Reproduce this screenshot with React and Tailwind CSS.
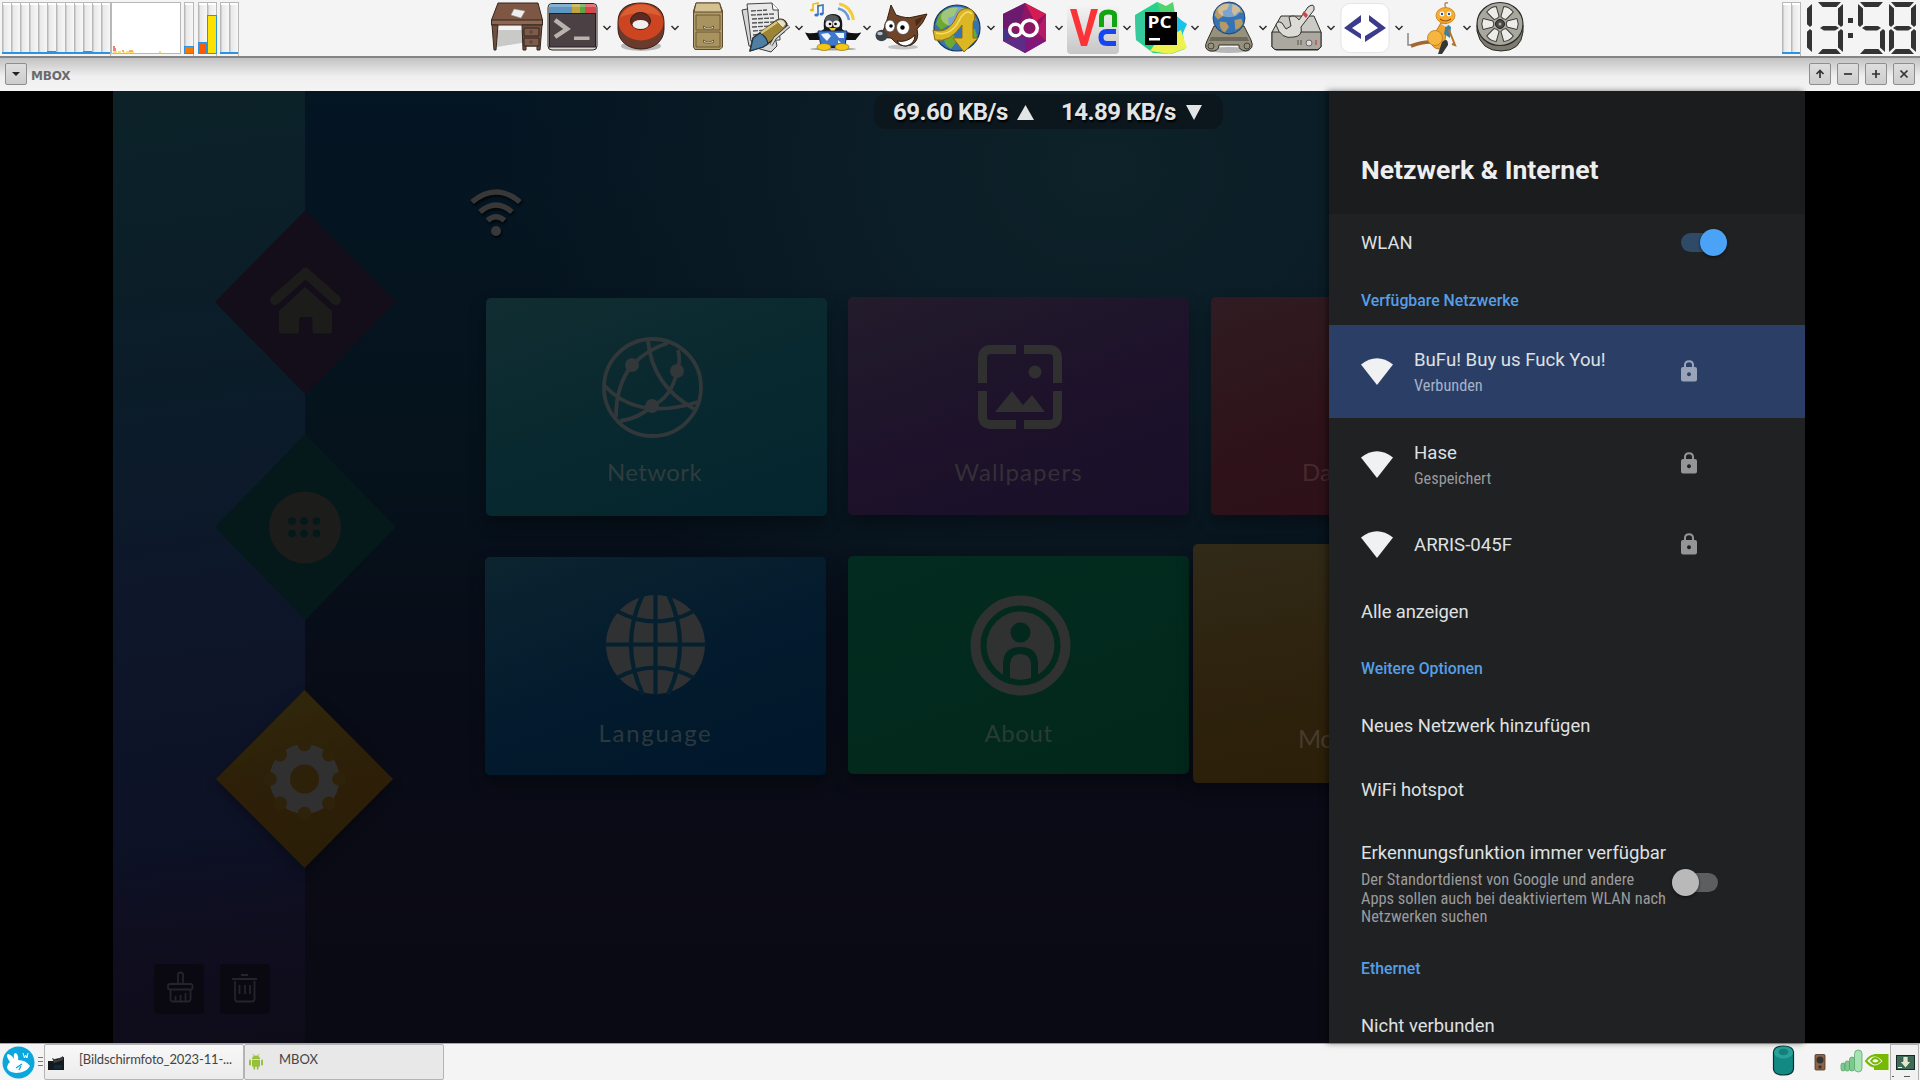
import React from "react";

/* ---------- top panel: monitors ---------- */

function Meter({ width = "w-[9px]", fill, fillClass }) {
  return (
    <div
      className={`relative h-[52px] ${width} border-t border-b border-l border-[#b8b8b8] bg-gradient-to-r from-[#e6e6e6] to-[#f7f7f7] shadow-[inset_0_2px_0_#fff,inset_1px_0_0_#d0d0d0] flex flex-col justify-end`}
    >
      {fill ? (
        <div className={`-ml-px border border-t-[1.5px] border-[#2b93e6] ${fillClass}`} />
      ) : (
        <div className="-ml-px h-[2px] -mb-px bg-[#2b93e6]" />
      )}
    </div>
  );
}

function CpuMeters() {
  const bumps = [5, 9];
  return (
    <div className="flex border-r border-[#b8b8b8]">
      {Array.from({ length: 12 }, (_, i) => (
        <Meter key={i} fill={bumps.includes(i)} fillClass="h-[3px] bg-[#cfe4f5] border-b-2 -mb-px" />
      ))}
    </div>
  );
}

function LoadGraph() {
  return (
    <svg className="h-[52px] w-[70px] border border-[#b8b8b8] bg-white" viewBox="0 0 68 50" shapeRendering="crispEdges">
      <path d="M1 43h2v2h1v5H1z" fill="#f08070" />
      <path d="M1 48h4v2H1zM6 48h3v2H6zM11 49h2v1h-2zM14 48h8v2h-8zM47 48h2v2h-2z" fill="#ffe070" />
      <path d="M10 47h2v2h-2zM17 47h4v2h-4z" fill="#f5b070" />
    </svg>
  );
}

/* ---------- top panel: launcher icons (56 × 56 boxes) ---------- */

function Desk() {
  return (
    <g stroke="#33261f" strokeWidth="1" strokeLinejoin="round">
      <path d="M8 47V30h30v12z" fill="#c9c9c7" stroke="none" />
      <path d="M9 3H49L53.500 20V24H2.500V20z" fill="#7d5744" />
      <path d="M2.500 20H53.500V25H2.500z" fill="#8f6750" />
      <path d="M3 25H9L7 50H5zM33 25H53L51 50H48V46H37V50H34z" fill="#70503f" />
      <path d="M35 28H50V36H35zM35 38H50V46H35z" fill="#7c5b48" />
      <path d="M25 9L36 11L32 18L22 15z" fill="#eee" stroke="#999" strokeWidth=".5" />
      <circle cx="42" cy="32" r="1" fill="#ddd" /><circle cx="42" cy="42" r="1" fill="#ddd" />
    </g>
  );
}
function Terminal() {
  return (
    <g>
      <rect x="3" y="3.500" width="49" height="46.500" rx="4" fill="#ddd9ce" stroke="#2b2426" />
      <path d="M4 13V8q0-4 4-4H27V13z" fill="#5d96c2" /><path d="M27 4h8v9h-8z" fill="#c2a43c" />
      <path d="M35 4h5v9h-5z" fill="#62a344" /><path d="M40 4h7q4 0 4 4v5H40z" fill="#d8474b" />
      <path d="M4 7q0-3 4-3h39q4 0 4 3z" fill="#fff" opacity=".25" />
      <rect x="4.500" y="13.500" width="46" height="33.500" fill="#4b4044" stroke="#241e20" />
      <path d="M10 20L22 29L10 37" fill="none" stroke="#b9b3ad" strokeWidth="4.500" />
      <path d="M29 36.500H44.500V40H29z" fill="#b9b3ad" />
    </g>
  );
}
function Ring() {
  return (
    <g>
      <ellipse cx="28" cy="46" rx="20" ry="5" fill="#000" opacity=".25" />
      <path d="M5 22C5 8 15 3 28 3s23 6 23 19v7c0 12-10 20-23 20S5 41 5 29z" fill="#6a3a2c" stroke="#3b1f18" />
      <ellipse cx="28" cy="22" rx="22.500" ry="18.500" fill="#cd4420" />
      <path d="M7 18C11 8 20 4.500 28 4.500s16 3 20 12c-9-5-32-5-41 1.500z" fill="#e06a3c" opacity=".7" />
      <ellipse cx="27.500" cy="21" rx="10" ry="8.500" fill="#5c2a20" stroke="#3a1b14" />
      <ellipse cx="27.500" cy="24.500" rx="8" ry="4.500" fill="#f1eeec" />
    </g>
  );
}
function Cabinet() {
  return (
    <g stroke="#5d4b2c" strokeLinejoin="round">
      <path d="M15 3H38.500L41.500 11V47L39 49.500H14L12.500 47V11z" fill="#b09a67" />
      <path d="M15 3H38.500L41 12H13z" fill="#d3c192" />
      <path d="M15 15H39V30H15zM15 32H39V47H15z" fill="#a8925e" strokeWidth=".8" />
      <path d="M22.500 26q5 4 10 0v2.500q-5 2-10 0zM22.500 40q5 4 10 0v2.500q-5 2-10 0z" fill="#e4ddc0" strokeWidth=".8" />
    </g>
  );
}
function Papers() {
  return (
    <g strokeLinejoin="round">
      <path d="M5 10L31 5L40 46L34 52L12 46z" fill="#d6d6d6" stroke="#3d3d3d" />
      <path d="M10 4L35 3L41 9L43 40L14 41z" fill="#e9e9e9" stroke="#444" />
      <path d="M35 3L36 10H42" fill="#fff" stroke="#444" />
      <path d="M14 11l16-1M14 15l23-1M15 19l22-1M15 23l22-1M15 27l19-1M16 31l14-1M16 35l10-1" stroke="#555" strokeWidth="1.300" strokeDasharray="5 1" />
      <path d="M13 51L16 38L40 20Q47 17 50 24L47 32L26 47z" fill="#9c8434" stroke="#2d2a22" strokeWidth="1.300" />
      <path d="M13 51L16 38L23 33Q30 37 31 44L26 47z" fill="#4f7fa4" stroke="#26343e" strokeWidth="1.300" />
      <path d="M24 33L40 22" stroke="#d9c878" strokeWidth="2.500" />
      <path d="M39 21Q46 17 49 24L46 28z" fill="#e8e0c0" stroke="#555" strokeWidth=".6" />
      <path d="M52 26L38 38L34 45" fill="none" stroke="#333" strokeWidth="3.500" /><path d="M52 26L38 38L34 45" fill="none" stroke="#d5d5d5" strokeWidth="2" />
    </g>
  );
}
function Penguin() {
  return (
    <g>
      <ellipse cx="28" cy="49" rx="23" ry="1.500" fill="#555" opacity=".5" />
      <path d="M15 33Q7 35 2 34l3 5h9zM41 33Q49 35 54 34l-4 5h-8z" fill="#111" stroke="#111" strokeWidth="2" />
      <path d="M15 40Q14 31 19 29Q17 14 28 14T37 29Q43 32 41 42L38 48H18z" fill="#17181a" />
      <ellipse cx="27" cy="19.500" rx="7" ry="4.500" fill="#55585c" />
      <circle cx="24" cy="24" r="3.500" fill="#eee" /><circle cx="31.500" cy="24" r="3.500" fill="#eee" />
      <circle cx="25" cy="24" r="1.300" /><circle cx="30.500" cy="24" r="1.300" />
      <path d="M24 28L31 28L28 33z" fill="#f4c51d" />
      <path d="M13 31H42L40 46H16z" fill="#3d78cd" stroke="#17366c" />
      <path d="M16 34l7-1 3 3-4 5-4-4zM30 33l9 0 0 5-5 0zM33 40l3 3h-3z" fill="#edf3fa" />
      <ellipse cx="19" cy="47" rx="7" ry="3.500" fill="#f3c713" stroke="#8a6800" strokeWidth=".6" />
      <ellipse cx="37" cy="47" rx="7" ry="3.500" fill="#f3c713" stroke="#8a6800" strokeWidth=".6" />
      <path d="M8 10V4l5-1v6" fill="none" stroke="#e9bd15" strokeWidth="1.500" /><path d="M13 15V6l5-1v9" fill="none" stroke="#3973c5" strokeWidth="1.600" />
      <ellipse cx="7" cy="10" rx="2" ry="1.500" fill="#e9bd15" /><ellipse cx="11.500" cy="15" rx="2.200" ry="1.500" fill="#3973c5" /><ellipse cx="16.500" cy="14" rx="2" ry="1.500" fill="#3973c5" />
      <path d="M34 4Q46 6 48.500 20" fill="none" stroke="#f2cd38" strokeWidth="3" />
      <path d="M33 8.500Q42 10 44 20" fill="none" stroke="#6a9bd6" strokeWidth="2.500" />
    </g>
  );
}
function Gimp() {
  return (
    <g>
      <ellipse cx="30" cy="47" rx="15" ry="2.500" fill="#000" opacity=".2" />
      <path d="M14 20L18 5L23 15Q34 19 40 17L54 14Q50 24 44 29Q47 41 38 45Q27 49 18 38Q8 38 7 33Q12 30 12 24z" fill="#6f4428" stroke="#33200f" />
      <path d="M42 20L51 16Q47 23 43 26z" fill="#4a2c18" />
      <path d="M24 41Q34 43 42 35Q42 44 33 46Q27 46 24 41z" fill="#fff" stroke="#2d1c10" />
      <ellipse cx="17" cy="26" rx="5" ry="6" fill="#fff" stroke="#444" strokeWidth=".7" /><circle cx="18" cy="26" r="1.800" />
      <ellipse cx="30" cy="27.500" rx="6.500" ry="7" fill="#fff" stroke="#444" strokeWidth=".7" /><circle cx="29.500" cy="27.500" r="2.200" />
      <ellipse cx="8.500" cy="35.500" rx="6" ry="5.800" fill="#3b4248" /><ellipse cx="7" cy="33.500" rx="2.800" ry="1.800" fill="#b8c0c8" />
    </g>
  );
}
function Globe({ cx = 28, cy = 28, r = 23, land = "#6da832" }) {
  const k = r / 23;
  return (
    <g transform={`translate(${cx} ${cy}) scale(${k})`}>
      <circle r="23" fill="#3573b5" stroke="#16375c" strokeWidth="1.200" />
      <path d="M-18 -13Q-8 -23 1 -20L-3 -12L-9 -10L-8 -3L-16 2L-21 -4zM5 -20Q17 -16 20 -7L13 -9L8 -3L4 -9zM-13 5L-4 6L0 13L-6 21Q-15 16 -13 5zM8 3L18 1L20 8Q16 16 9 17z" fill={land} />
      <ellipse cy="-11" rx="16" ry="10" fill="#fff" opacity=".35" />
    </g>
  );
}
function Browser() {
  return (
    <g>
      <Globe cx={28} cy={28} r={23} />
      <path d="M4 30Q21 35 29 13Q35 6 43 10Q48 15 44 23V38H49L35 52L24 38H33V25Q21 43 6 40z" fill="#dcb725" stroke="#8c6c0c" />
      <path d="M7 33Q23 37 32 17Q38 9 43 14" fill="none" stroke="#f5de6c" strokeWidth="1.500" />
    </g>
  );
}
function Hexagon() {
  return (
    <g>
      <path d="M28 3L49 14V41L28 53L6 41V14z" fill="#8c1664" />
      <path d="M28 3L49 14L38 22z" fill="#d41b52" /><path d="M49 14V41L39 31z" fill="#b81868" />
      <path d="M6 14L28 3L24 22L6 30z" fill="#6c1a6e" /><path d="M6 28L22 34L6 41z" fill="#44338a" />
      <path d="M6 41L28 36V53z" fill="#5c2c86" /><path d="M28 37L49 41L28 53z" fill="#82177b" />
      <circle cx="18.500" cy="30" r="5.800" fill="none" stroke="#fff" strokeWidth="3.500" />
      <circle cx="32.500" cy="28" r="7.800" fill="none" stroke="#fff" strokeWidth="3.500" />
    </g>
  );
}
function Vnc() {
  return (
    <g>
      <defs><linearGradient id="vb" x2="0" y2="1"><stop stopColor="#f6f6f6" /><stop offset="1" stopColor="#c6c6c6" /></linearGradient></defs>
      <rect x="2" y="3" width="52" height="51" rx="4" fill="url(#vb)" />
      <path d="M5 9H11.500L19 36L26 9H33L22 46H16z" fill="#fb3236" />
      <path d="M36.500 27V17q0-5 7-5t6 5V27" fill="none" stroke="#12a412" strokeWidth="5" />
      <path d="M51 31.500H42q-6 0-6 6t6 6h9" fill="none" stroke="#1746f0" strokeWidth="5" />
    </g>
  );
}
function Pycharm() {
  return (
    <g>
      <path d="M2 15L24 2L34 7L48 20L52 49L38 54L20 53L3 40z" fill="#24d28c" />
      <path d="M24 2L33 6L40 2L42 14L30 20z" fill="#50d46c" /><path d="M42 16L54 24L46 42z" fill="#18c3ec" />
      <path d="M48 30L54 48L37 54L17 51L22 44z" fill="#eef24e" /><path d="M2 16L14 12V44L3 40z" fill="#35c99c" />
      <rect x="12" y="12" width="32" height="33" fill="#000" />
      <text x="14.500" y="28" fill="#fff" fontFamily="Open Sans, sans-serif" fontWeight="700" fontSize="16" textLength="24" lengthAdjust="spacingAndGlyphs">PC</text>
      <path d="M16 38h11v2.500H16z" fill="#fff" />
    </g>
  );
}
function GlobeStand() {
  return (
    <g>
      <ellipse cx="28" cy="50" rx="21" ry="3" fill="#000" opacity=".25" />
      <path d="M13 26H43L50 40Q54 49 45 51Q37 50 38 45H18Q18 52 9 51Q2 49 6 41z" fill="#96917c" stroke="#2f2d27" />
      <path d="M10 37H46L48 41H8z" fill="#6e6a5b" />
      <circle cx="10" cy="46" r="3" fill="none" stroke="#45423a" /><circle cx="46" cy="46" r="3" fill="none" stroke="#45423a" />
      <Globe cx={28} cy={18} r={16} land="#b79a62" />
    </g>
  );
}
function Wrench() {
  return (
    <g strokeLinejoin="round">
      <path d="M12 16H45L52 32V47L49 50H7L3 47V32z" fill="#cbcac4" stroke="#2e2e2c" />
      <path d="M3 32H52V47L49 49.500H6L3 47z" fill="#aaa89f" stroke="#2e2e2c" />
      <path d="M29 40v5M32 40v5" stroke="#555" /><circle cx="40" cy="43" r="3" fill="#ddd" stroke="#666" /><path d="M47 40v5" stroke="#b55" strokeWidth="1.500" />
      <path d="M7 25Q8 20 13 23L17 29L22 26L20 17Q26 14 30 20L39 7Q46 2 45 10L32 27Q34 36 25 37Q12 40 7 25z" fill="#dcdbd6" stroke="#353533" />
      <path d="M35 11L39 15L37 18L33 14z" fill="#c84848" />
    </g>
  );
}
function Code() {
  return (
    <g>
      <rect x="4" y="3.500" width="48" height="49" rx="9" fill="#fff" stroke="#e0e0e0" strokeWidth=".8" />
      <path d="M24 15V22L15 28L24 34V39L7 28z" fill="#3b3b8c" /><path d="M32 15V21L41 28L28 36V42L49 28z" fill="#3b3b8c" />
    </g>
  );
}
function Figure() {
  return (
    <g>
      <path d="M3 33V45H9" fill="none" stroke="#888" strokeWidth="1.500" /><path d="M6 46Q22 40 32 43" fill="none" stroke="#a4662c" strokeWidth="3.500" />
      <path d="M30 33L27 45Q31 51 39 48L41 33Q42 24 41 21H37z" fill="#f0a52e" stroke="#a86a18" strokeWidth=".8" />
      <path d="M41 23L46 27L45 38L39 34z" fill="#3d80a0" /><path d="M44 30L50 45L47 44" fill="none" stroke="#b77328" strokeWidth="2" />
      <path d="M37 42Q43 37 43 45L37 54H33z" fill="#33373a" />
      <circle cx="30" cy="38" r="7.500" fill="#f6b440" stroke="#b87a1e" strokeWidth=".8" />
      <ellipse cx="40.500" cy="15.500" rx="9.500" ry="8" fill="#f8ad2c" stroke="#b9741b" strokeWidth=".7" />
      <path d="M41 8Q38 2 43 3" fill="none" stroke="#b88a5a" strokeWidth="1.500" />
      <circle cx="37" cy="14" r="2.400" fill="#fff" /><circle cx="44" cy="14" r="2.400" fill="#fff" /><circle cx="37" cy="14" r="1.200" fill="#2050b0" /><circle cx="44" cy="14" r="1.200" fill="#2050b0" />
      <path d="M35 19Q40 23 46 19" fill="none" stroke="#a04814" strokeWidth="1.200" /><path d="M36 24h9l-4 3z" fill="#dce7ee" />
    </g>
  );
}
function Reel() {
  return (
    <g>
      <path d="M4 25V31Q8 51 28 51T50 32V25z" fill="#7d7b70" stroke="#2b2a27" />
      <ellipse cx="27" cy="24" rx="23" ry="21.500" fill="#a9a89e" stroke="#2b2a27" strokeWidth="1.200" />
      {[0, 60, 120, 180, 240, 300].map((a) => (
        <path key={a} d="M21.500 7Q27 4.500 32.500 7L30 17Q27 18.500 24 17z" transform={`rotate(${a + 30} 27 24)`} fill="#ecece9" stroke="#3b3a36" strokeLinejoin="round" />
      ))}
      <circle cx="27" cy="24" r="4.500" fill="#4a4943" stroke="#22211f" /><circle cx="27" cy="24" r="1.500" fill="#aaa" />
    </g>
  );
}

const LAUNCHERS = [
  { icon: Desk }, { icon: Terminal, menu: true }, { icon: Ring, menu: true }, { icon: Cabinet },
  { icon: Papers, menu: true }, { icon: Penguin, menu: true }, { icon: Gimp }, { icon: Browser, menu: true },
  { icon: Hexagon, menu: true }, { icon: Vnc, menu: true }, { icon: Pycharm, menu: true }, { icon: GlobeStand, menu: true },
  { icon: Wrench, menu: true }, { icon: Code, menu: true }, { icon: Figure, menu: true }, { icon: Reel },
];

/* ---------- LCD clock ---------- */

const SEGMENTS = {
  a: "top-0 left-[2px] w-[23px] h-[5px] [clip-path:polygon(0_0,100%_0,80%_100%,20%_100%)]",
  b: "top-[2px] right-0 w-[5px] h-[23px] [clip-path:polygon(100%_0,100%_92%,60%_100%,0_88%,0_20%)]",
  c: "bottom-[2px] right-0 w-[5px] h-[23px] [clip-path:polygon(100%_100%,100%_8%,60%_0,0_12%,0_80%)]",
  d: "bottom-0 left-[2px] w-[23px] h-[5px] [clip-path:polygon(0_100%,100%_100%,80%_0,20%_0)]",
  e: "bottom-[2px] left-0 w-[5px] h-[23px] [clip-path:polygon(0_100%,0_8%,40%_0,100%_12%,100%_80%)]",
  f: "top-[2px] left-0 w-[5px] h-[23px] [clip-path:polygon(0_0,0_92%,40%_100%,100%_88%,100%_20%)]",
  g: "top-[23.5px] left-[4px] w-[19px] h-[5px] [clip-path:polygon(0_50%,20%_0,80%_0,100%_50%,80%_100%,20%_100%)]",
};
const DIGITS = { 1: "bc", 3: "abcdg", 5: "acdfg", 8: "abcdefg" };

function Digit({ value }) {
  return (
    <div className="relative h-[52px] w-[27px]">
      {DIGITS[value].split("").map((s) => (
        <div key={s} className={`absolute bg-[#333] ${SEGMENTS[s]}`} />
      ))}
    </div>
  );
}

function Clock() {
  return (
    <div className="flex gap-[4px] pt-[2px] pr-[4px]">
      <div className="mr-[2px] -ml-[18px] flex gap-[4px]">
        <Digit value={1} />
        <Digit value={3} />
      </div>
      <div className="mt-[16px] mr-px -ml-px flex w-[5px] flex-col gap-[10px]">
        <div className="h-[5px] bg-[#333]" />
        <div className="h-[5px] bg-[#333]" />
      </div>
      <Digit value={5} />
      <Digit value={8} />
    </div>
  );
}

function TopPanel() {
  return (
    <header className="flex h-[58px] border-b-2 border-[#858585] bg-[#f4f4f4]">
      <div className="flex w-[489px] shrink-0 pt-[2px] pl-[2px]">
        <CpuMeters />
        <LoadGraph />
        <div className="ml-[3px] flex border-r border-[#b8b8b8]"><Meter fill fillClass="h-[8px] bg-[#f57900] -mr-px -mb-px" /></div>
        <div className="ml-[4px] flex border-r border-[#b8b8b8]">
          <Meter fill fillClass="h-[12px] bg-[#ff5a00] -mb-px" />
          <Meter fill fillClass="h-[39px] bg-[#ffe100] -mr-px -mb-px" />
        </div>
        <div className="ml-[3px] flex border-r border-[#b8b8b8]"><Meter /><Meter /></div>
      </div>
      <div className="flex grow">
        {LAUNCHERS.map(({ icon: Icon, menu }, i) => (
          <div key={i} className="flex items-center">
            <svg className="h-[56px] w-[56px]" viewBox="0 0 56 56"><Icon /></svg>
            {menu && (
              <svg className="h-[6px] w-[12px]" viewBox="0 0 12 6"><path d="M2.500 1L6 4.500L9.500 1" fill="none" stroke="#2e2e2e" strokeWidth="1.500" /></svg>
            )}
          </div>
        ))}
      </div>
      <div className="mr-[2px] flex pt-[2px]">
        <div className="flex border-r border-[#b8b8b8]"><Meter /><Meter /></div>
      </div>
      <Clock />
    </header>
  );
}

/* ---------- window title bar ---------- */

function TitleButton({ children }) {
  return (
    <div className="flex h-[22px] w-[22px] items-center justify-center rounded-[2px] border border-[#8e8e8e] bg-gradient-to-b from-[#dedede] to-[#cdcdcd]">
      <svg className="h-[12px] w-[12px]" viewBox="0 0 12 12" fill="none" stroke="#333" strokeWidth="1.700">{children}</svg>
    </div>
  );
}

function TitleBar() {
  return (
    <div className="flex h-[33px] items-start bg-gradient-to-b from-[#c2c2c2] via-[#efefef] via-55% to-[#f4f4f4] pt-[5px] pr-[5px] pl-[5px]">
      <TitleButton><path d="M2 4H10L6 8z" fill="#222" stroke="none" /></TitleButton>
      <span className="ml-[4px] pt-[5px] font-['DejaVu_Sans'] text-[12px] leading-[16px] font-bold tracking-[-0.2px] text-[#6b6b6b]">MBOX</span>
      <div className="ml-auto flex gap-[6px]">
        <TitleButton><path d="M6 10V3M2.500 6L6 2.500L9.500 6" /></TitleButton>
        <TitleButton><path d="M2 6H10" /></TitleButton>
        <TitleButton><path d="M2 6H10M6 2V10" /></TitleButton>
        <TitleButton><path d="M2.500 2.500L9.500 9.500M9.500 2.500L2.500 9.500" /></TitleButton>
      </div>
    </div>
  );
}

/* ---------- launcher sidebar ---------- */

function SideNav() {
  return (
    <aside className="relative z-10 flex w-[192px] shrink-0 flex-col bg-[linear-gradient(172deg,#0c2228_0%,#0b1e28_22%,#0c1a2a_42%,#0e1529_60%,#0d1226_76%,#0f0d1e_90%,#0f0c1a_100%)] pt-[119px]">
      <svg className="ml-[102px] h-[186px] w-[181px]" viewBox="0 0 181 186">
        <path d="M90.500 0L181 92L90.500 184.500L0 92z" fill="#140e1a" />
        <path d="M60 90L90.500 63L121 90" fill="none" stroke="#1c1c1b" strokeWidth="10" strokeLinecap="round" strokeLinejoin="round" />
        <path d="M64 101L90 77L117 101V121q0 2.500-2.500 2.500H99.500q-2 0-2-2V110q0-3-3-3H87q-3 0-3 3V121.500q0 2-2 2H66.500q-2.500 0-2.500-2.500z" fill="#1c1c1b" />
      </svg>
      <svg className="mt-[38px] ml-[102px] h-[186px] w-[181px]" viewBox="0 0 181 186">
        <path d="M90.500 0L181 93L90.500 186L0 93z" fill="#05181a" />
        <circle cx="90" cy="93.500" r="36" fill="#1c1c1b" />
        {[77, 89, 101.500].map((x) => [87, 99.500].map((y) => <circle key={`${x}-${y}`} cx={x} cy={y} r="3.800" fill="#05181a" />))}
      </svg>
      <svg className="mt-[70px] ml-[103px] h-[178px] w-[178px] drop-shadow-[0_4px_6px_rgba(0,0,0,0.35)]" viewBox="0 0 178 178">
        <defs><linearGradient id="gold" x2=".2" y2="1"><stop offset=".2" stopColor="#30260b" /><stop offset=".55" stopColor="#2d1f08" /><stop offset="1" stopColor="#2b1e07" /></linearGradient></defs>
        <path d="M88.500 0L177 89L88.500 178L0 89z" fill="url(#gold)" />
        <circle cx="88.500" cy="89" r="35" fill="#303030" />
        {[0, 45, 90, 135, 180, 225, 270, 315].map((a) => (
          <circle key={a} cx="88.500" cy="54.500" r="6.800" fill="#2e220a" transform={`rotate(${a} 88.500 89)`} />
        ))}
        <circle cx="88.500" cy="89" r="14.500" fill="#2e210a" />
      </svg>
      <div className="mt-[96px] ml-[41px] flex gap-[16px]">
        <svg className="h-[50px] w-[50px] rounded-[4px] bg-[#0a0811]" viewBox="0 0 50 50" fill="none" stroke="#24242d" strokeWidth="1.800">
          <rect x="14" y="20" width="24.500" height="5.500" rx="2" /><path d="M24 20V11q0-2.500 2.500-2.500T29 11V20M16.500 25.500V35q0 2.500 2.500 2.500H34q2.500 0 2.500-2.500V25.500M21.500 32v5M26.500 31v6M31.500 29v8" />
        </svg>
        <svg className="h-[50px] w-[50px] rounded-[4px] bg-[#0a0811]" viewBox="0 0 50 50" fill="none" stroke="#24242d" strokeWidth="1.800">
          <path d="M12 15H37M21 11H28M15 17V35q0 2.500 2.500 2.500H32q2.500 0 2.500-2.500V17M19.500 21v9M25 21v9M30 21v9" />
        </svg>
      </div>
    </aside>
  );
}

/* ---------- launcher cards ---------- */

function Card({ box, label, labelClass = "", iconClass = "", children }) {
  return (
    <div className={`flex shrink-0 flex-col items-center rounded-[5px] shadow-[0_8px_16px_rgba(0,0,0,0.35)] ${box}`}>
      <div className={`flex h-[101px] w-[101px] shrink-0 items-center justify-center ${iconClass}`}>{children}</div>
      <span className={`font-[Lato,sans-serif] leading-[30px] ${labelClass}`}>{label}</span>
    </div>
  );
}

function NetworkIcon() {
  return (
    <svg className="h-[101px] w-[101px]" viewBox="0 0 101 101" fill="none" stroke="#32373a" strokeWidth="3.800">
      <circle cx="50.500" cy="50.500" r="48.500" />
      <path d="M46 4Q50 48 92 72M76 13Q79 24 75 34Q70 60 50 69Q36 82 18 84M66 6Q46 12 30 28Q14 48 14 80M3 49Q35 84 96 65" />
      <circle cx="30" cy="28" r="7" fill="#32373a" stroke="none" /><circle cx="75" cy="34" r="7" fill="#32373a" stroke="none" /><circle cx="50" cy="69" r="7" fill="#32373a" stroke="none" />
    </svg>
  );
}
function WallpaperIcon() {
  return (
    <svg className="h-[84px] w-[84px]" viewBox="0 0 84 84">
      <path d="M4.500 38V13q0-8.500 8.500-8.500H38M46 4.500H71q8.500 0 8.500 8.500V38M79.500 46V71q0 8.500-8.500 8.500H46M38 79.500H13q-8.500 0-8.500-8.500V46" fill="none" stroke="#303031" strokeWidth="9" />
      <circle cx="57" cy="27" r="6.500" fill="#303031" /><path d="M17 67L34 46L45 60L54 50L67 67z" fill="#303031" />
    </svg>
  );
}
function LanguageIcon() {
  return (
    <svg className="h-[101px] w-[101px]" viewBox="0 0 101 101">
      <circle cx="50.500" cy="50.500" r="49.500" fill="#303132" />
      <path d="M50.500 0V101M0 50.500H101M38 0Q14 50 38 101M63 0Q87 50 63 101M12 17Q50 38 89 17M12 84Q50 63 89 84" fill="none" stroke="#05202f" strokeWidth="4.200" />
    </svg>
  );
}
function AboutIcon() {
  return (
    <svg className="h-[101px] w-[101px]" viewBox="0 0 101 101">
      <circle cx="50.500" cy="50.500" r="45" fill="none" stroke="#303131" strokeWidth="10" />
      <circle cx="50.500" cy="50.500" r="34" fill="#303131" />
      <circle cx="50.500" cy="37.500" r="10" fill="#03281d" />
      <path d="M33 84V68Q34 52 50.500 52T68 68V84z" fill="#03281d" />
      <path d="M40 83V69Q41 59 50.500 59T61 69V83Q50 86 40 83z" fill="#303131" />
    </svg>
  );
}

function Launcher() {
  return (
    <main className="relative h-[952px] w-[1024px] shrink-0 overflow-hidden bg-[radial-gradient(ellipse_60%_55%_at_78%_8%,#0d2229_0%,#0b1c26_45%,transparent_100%),linear-gradient(180deg,#041523_0%,#05131c_35%,#080d18_58%,#0b0a15_85%,#090a13_100%)]">
      <div className="absolute top-[3px] left-[569px] flex h-[35px] w-[349px] items-center rounded-[12px] bg-[#0b171d] pl-[19px] font-[Roboto,sans-serif] text-[24px] font-bold tracking-[-0.5px] text-[#e2e4e5] [text-shadow:1px_2px_2px_#000]">
        <span className="w-[124px]">69.60 KB/s</span>
        <svg className="mt-[2px] h-[15px] w-[17px]" viewBox="0 0 17 15"><path d="M8.500 0L17 15H0z" fill="#e2e4e5" /></svg>
        <span className="ml-[27px] w-[125px]">14.89 KB/s</span>
        <svg className="mt-[2px] h-[15px] w-[16px]" viewBox="0 0 16 15"><path d="M0 0H16L8 15z" fill="#e2e4e5" /></svg>
      </div>
      <svg className="mt-[98px] ml-[164px] h-[48px] w-[56px] drop-shadow-[1px_2px_1px_rgba(0,0,0,0.7)]" viewBox="0 0 56 48" fill="none" stroke="#383838" strokeWidth="5.500">
        <path d="M3 13Q27 -7 51 13M11 23Q27 9 43 23M18.500 31.500Q27 24 35.500 31.500" /><circle cx="27" cy="42" r="5" fill="#383838" stroke="none" />
      </svg>
      <div className="mt-[60px] ml-[181px] flex items-start gap-[21px]">
        <Card box="mt-[1px] h-[218px] w-[341px] pt-[39px] bg-linear-160 from-[#112d31] via-[#08292f] to-[#04252e]" label="Network" labelClass="mt-[19px] -ml-[4px] text-[24px] tracking-[0.4px] text-[#2f3c3f]" iconClass="-ml-[8px]"><NetworkIcon /></Card>
        <Card box="h-[218px] w-[341px] pt-[39px] bg-linear-160 from-[#231c2c] via-[#1d122a] to-[#190f28]" label="Wallpapers" labelClass="mt-[20px] text-[24px] tracking-[1.1px] text-[#352f36]" iconClass="ml-[2px]"><WallpaperIcon /></Card>
        <Card box="ml-[1px] h-[218px] w-[341px] items-start pt-[39px] pl-[91px] bg-linear-160 from-[#2f1c22] via-[#2e1219] to-[#2c0f17]" label="Da" labelClass="mt-[20px] text-[24px] text-[#46292f]" />
      </div>
      <div className="mt-[27px] ml-[180px] flex items-start">
        <Card box="mt-[14px] h-[218px] w-[341px] pt-[37px] bg-linear-160 from-[#0d2430] via-[#031b2d] to-[#01172c]" label="Language" labelClass="mt-[23px] text-[24px] tracking-[1.7px] text-[#2b383e]" iconClass="-ml-[1px]"><LanguageIcon /></Card>
        <Card box="mt-[13px] ml-[22px] h-[218px] w-[341px] pt-[39px] bg-linear-160 from-[#032b1f] to-[#02281b]" label="About" labelClass="mt-[22px] text-[24px] tracking-[0.6px] text-[#283c33]" iconClass="ml-[4px]"><AboutIcon /></Card>
        <Card box="mt-px ml-[4px] h-[239px] w-[375px] items-start pt-[58px] pl-[105px] bg-linear-170 from-[#312a18] via-[#2d220d] to-[#2b1e07]" label="Mo" labelClass="mt-[20px] text-[25px] tracking-[-0.5px] text-[#453c2d]" />
      </div>
    </main>
  );
}

/* ---------- settings panel ---------- */

function Toggle({ on }) {
  return on ? (
    <div className="relative h-[19px] w-[46px] rounded-full bg-[#2e4a66]">
      <div className="absolute -top-[4px] right-0 h-[27px] w-[27px] rounded-full bg-[#4ba3f7] shadow-[0_1px_3px_rgba(0,0,0,0.6)]" />
    </div>
  ) : (
    <div className="relative h-[19px] w-[46px] rounded-full bg-[#5d5e60]">
      <div className="absolute -top-[4px] left-0 h-[27px] w-[27px] rounded-full bg-[#b9b9b9] shadow-[0_1px_3px_rgba(0,0,0,0.6)]" />
    </div>
  );
}

function NetworkRow({ name, status, box, subClass = "text-[#9a9b9c]", lockFill = "#949596" }) {
  return (
    <div className={`flex items-center pl-[32px] ${box}`}>
      <svg className="h-[27px] w-[32px]" viewBox="0 0 32 27"><path d="M0 6.500Q16 -6 32 6.500L16 27z" fill="#f0f1f2" /></svg>
      <div className="ml-[21px] w-[267px]">
        <div className={`text-[18.6px] leading-[24px] font-[430] ${status ? "mt-[2px]" : ""}`}>{name}</div>
        {status && <div className={`mt-[3px] text-[16.3px] leading-[22px] font-stretch-75% ${subClass}`}>{status}</div>}
      </div>
      <svg className="mb-[2px] h-[22px] w-[16px]" viewBox="0 0 16 22">
        <path d="M4 8V5Q4 1.200 8 1.200T12 5V8" fill="none" stroke={lockFill} strokeWidth="2" />
        <path fillRule="evenodd" d="M2 7H14q2 0 2 2V19.500q0 2-2 2H2q-2 0-2-2V9q0-2 2-2zM8 12.200a2 2 0 1 0 .01 0z" fill={lockFill} />
      </svg>
    </div>
  );
}

function SectionLabel({ children, box }) {
  return <h2 className={`flex items-center pl-[32px] text-[15.8px] font-medium text-[#559fe6] ${box}`}>{children}</h2>;
}
function Row({ children, box }) {
  return <div className={`flex items-center pl-[32px] text-[18.4px] font-[430] ${box}`}>{children}</div>;
}

function SettingsPanel() {
  return (
    <section className="z-10 flex h-[952px] w-[476px] shrink-0 flex-col overflow-hidden bg-[#202123] font-[Roboto,sans-serif] text-[#dfe0e1] shadow-[-2px_0_6px_rgba(0,0,0,0.5)]">
      <h1 className="h-[123px] shrink-0 bg-[#1b1c1e] pt-[63px] pl-[32px] text-[26.500px] leading-[32px] font-bold text-[#eeeeef]">Netzwerk &amp; Internet</h1>
      <Row box="h-[57px] shrink-0">
        <span className="mt-px w-[320px]">WLAN</span>
        <Toggle on />
      </Row>
      <SectionLabel box="h-[54px] shrink-0 pt-[5px]">Verfügbare Netzwerke</SectionLabel>
      <NetworkRow name="BuFu! Buy us Fuck You!" status="Verbunden" box="h-[93px] shrink-0 bg-[#2b3f66]" subClass="text-[#a6b1c6]" lockFill="#9aa4b9" />
      <NetworkRow name="Hase" status="Gespeichert" box="h-[92px] shrink-0" />
      <NetworkRow name="ARRIS-045F" box="h-[69px] shrink-0" />
      <Row box="h-[65px] shrink-0 tracking-[-0.1px] pt-px">Alle anzeigen</Row>
      <SectionLabel box="h-[50px] shrink-0">Weitere Optionen</SectionLabel>
      <Row box="h-[64px] shrink-0">Neues Netzwerk hinzufügen</Row>
      <Row box="h-[63px] shrink-0">WiFi hotspot</Row>
      <div className="flex h-[123px] shrink-0 pt-[20px] pl-[32px]">
        <div className="w-[311px] whitespace-nowrap">
          <div className="text-[18.5px] leading-[24px] font-[430]">Erkennungsfunktion immer verfügbar</div>
          <p className="mt-[6px] text-[16.4px] leading-[18.5px] font-stretch-75% text-[#9a9b9c]">
            Der Standortdienst von Google und andere<br />Apps sollen auch bei deaktiviertem WLAN nach<br />Netzwerken suchen
          </p>
        </div>
        <div className="pt-[32px]"><Toggle /></div>
      </div>
      <SectionLabel box="h-[50px] shrink-0">Ethernet</SectionLabel>
      <Row box="h-[64px] shrink-0">Nicht verbunden</Row>
    </section>
  );
}

/* ---------- taskbar ---------- */

function Taskbar() {
  return (
    <footer className="flex h-[37px] border-t border-[#a9a9a9] bg-[#f4f4f4] font-[Lato,sans-serif] text-[13px] text-[#333]">
      <svg className="mt-[2px] ml-[2px] h-[33px] w-[33px]" viewBox="0 0 33 33">
        <circle cx="16.500" cy="16.500" r="16" fill="#0aa6dc" />
        <path d="M8 16Q3 9 6 8Q10 9 12 13Q11 6 14 7Q17 10 16 14Q24 14 28 20Q24 27 14 27Q5 26 5 21Q6 17 8 16z" fill="#fff" />
        <path d="M14 22L20 18M17 24L19 20" fill="none" stroke="#0aa6dc" strokeWidth="1.300" />
        <path d="M21 7l1.500 5 1.200-3 1.200 3L26 7" fill="none" stroke="#fff" />
      </svg>
      <div className="mt-[13px] mr-[1px] ml-[3px] flex w-[5px] flex-col gap-[3px]">
        <div className="h-px bg-[#777]" /><div className="h-px bg-[#777]" /><div className="h-px bg-[#777]" />
      </div>
      <div className="flex h-[36px] w-[200px] rounded-[2px] border border-[#b4b4b4] bg-gradient-to-b from-[#f8f8f8] to-[#ececec] pl-[3px]">
        <svg className="mt-[10px] h-[16px] w-[17px]" viewBox="0 0 17 16"><path d="M0 6H7V4L16 2V15H0z" fill="#16191b" /><path d="M4 3L9 5 15 1V5L6 8z" fill="#3d4043" /><path d="M6 10h8v4H6z" fill="#102b36" /></svg>
        <span className="mt-[4px] ml-[14px] text-[13px] leading-[20px] tracking-[-0.15px] whitespace-nowrap text-[#444]">[Bildschirmfoto_2023-11-...</span>
      </div>
      <div className="flex h-[36px] w-[200px] rounded-[2px] border border-[#b4b4b4] bg-[#e8e8e8] pl-[4px]">
        <svg className="mt-[9px] h-[16px] w-[14px]" viewBox="0 0 14 16" fill="#97c03d">
          <path d="M3 5Q3 1.500 7 1.500T11 5zM3 5.800H11V12q0 .8-.8.800H9.500V15.500H7.800V12.800H6.200V15.500H4.500V12.800H3.800Q3 12.800 3 12z" /><rect y="5.500" width="2" height="6" rx="1" /><rect x="12" y="5.500" width="2" height="6" rx="1" /><path d="M4 0L5.500 2.500M10 0L8.500 2.500" stroke="#97c03d" strokeWidth=".8" />
        </svg>
        <span className="mt-[4px] ml-[16px] text-[13px] leading-[20px] text-[#444]">MBOX</span>
      </div>
      <div className="ml-auto flex">
        <svg className="h-[36px] w-[148px]" viewBox="0 0 148 36">
          <path d="M1.500 8Q2 2 11.500 2T21.500 8V25Q21 31 11.500 31T1.500 25z" fill="#128a83" stroke="#062e2c" strokeWidth="1.200" />
          <ellipse cx="11.500" cy="8.500" rx="9.500" ry="6" fill="#2aa29a" /><ellipse cx="11.500" cy="8" rx="5" ry="3.200" fill="#157f79" />
          <rect x="43" y="10.500" width="10" height="15.500" rx="1" fill="#8d6446" stroke="#4e3626" strokeWidth=".8" /><circle cx="48" cy="16" r="3.500" fill="#333" /><circle cx="48" cy="23" r="1.700" fill="#333" />
          <g fill="#7dc98f" stroke="#4f9f62" strokeWidth=".7"><rect x="69" y="19" width="4" height="8" rx="2" /><rect x="73" y="17" width="4.500" height="10" rx="2" /><rect x="77.500" y="13" width="5" height="14" rx="2.500" /><rect x="82.500" y="6" width="7.500" height="22" rx="3.700" fill="#a5e3b2" /></g>
          <path d="M102 10H116.500V26H102z" fill="#76b900" />
          <path d="M94 17Q102 6 112 17Q103 28 94 17z" fill="#f4f4f4" stroke="#76b900" strokeWidth="2" /><path d="M99 17Q103 11 108 17Q103 22 99 17z" fill="none" stroke="#76b900" strokeWidth="1.800" />
          <rect x="118.500" y=".5" width="28" height="36" fill="#f1f1f1" stroke="#b0b0b0" />
          <rect x="124.500" y="11.500" width="18" height="14" fill="#3d6b57" stroke="#1c2a24" /><path d="M131 12.500h5v5h3l-5.500 6.500L128 17.500h3z" fill="#dfe8c8" stroke="#27443a" strokeWidth=".6" /><path d="M126 23.500h4" stroke="#eee" /><path d="M120 32.500h2M132 32.500h6" stroke="#555" />
        </svg>
      </div>
    </footer>
  );
}

export default function App() {
  return (
    <div className="flex h-[1080px] w-[1920px] flex-col overflow-hidden bg-black">
      <TopPanel />
      <TitleBar />
      <div className="flex h-[952px] shrink-0 bg-black pl-[113px]">
        <SideNav />
        <Launcher />
        <SettingsPanel />
      </div>
      <Taskbar />
    </div>
  );
}
